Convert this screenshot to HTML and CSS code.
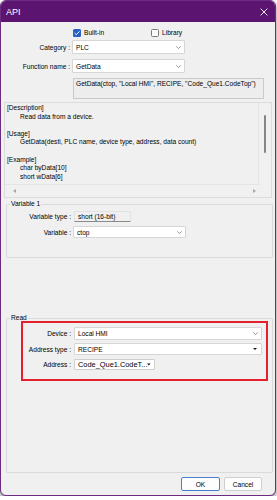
FILE: index.html
```html
<!DOCTYPE html>
<html lang="en">
<head>
    <meta charset="UTF-8">
    <title>API</title>
    <link rel="stylesheet" href="styles.css">
</head>
<body>

<div class="window">
    <div class="titlebar">
        <span class="title">API</span>
        <svg class="close" width="8" height="8" viewBox="0 0 8 8"><path d="M0.6 0.6L7.4 7.4M7.4 0.6L0.6 7.4" stroke="#fff" stroke-width="0.9"/></svg>
    </div>

    <div class="content">
        <!-- Source -->
        <div class="check-row">
            <label class="check-item built-in">
                <span class="box checked"><svg width="8" height="8" viewBox="0 0 8 8"><path d="M1.6 4.1L3.3 5.7L6.5 2.3" fill="none" stroke="#fff" stroke-width="1"/></svg></span>
                Built-in
            </label>
            <label class="check-item">
                <span class="box"></span>
                Library
            </label>
        </div>

        <div class="row top-row row-category">
            <span class="label">Category :</span>
            <div class="combo combo-top">
                <span>PLC</span>
                <svg width="5" height="3" viewBox="0 0 5 3"><path d="M0.3 0.3L2.5 2.6L4.7 0.3" fill="none" stroke="#6e6e6e" stroke-width="0.7"/></svg>
            </div>
        </div>

        <div class="row top-row row-function">
            <span class="label">Function name :</span>
            <div class="combo combo-top">
                <span>GetData</span>
                <svg width="5" height="3" viewBox="0 0 5 3"><path d="M0.3 0.3L2.5 2.6L4.7 0.3" fill="none" stroke="#6e6e6e" stroke-width="0.7"/></svg>
            </div>
        </div>

        <div class="signature">GetData(ctop, "Local HMI", RECIPE, "Code_Que1.CodeTop")</div>

        <!-- Description -->
        <div class="desc">
            <div class="desc-text">
                <div>[Description]</div>
                <div class="indent">Read data from a device.</div>
                <div>&nbsp;</div>
                <div>[Usage]</div>
                <div class="indent">GetData(desti, PLC name, device type, address, data count)</div>
                <div>&nbsp;</div>
                <div>[Example]</div>
                <div class="indent">char byData[10]</div>
                <div class="indent">short wData[6]</div>
                <div>&nbsp;</div>
            </div>
            <div class="vscroll"><span class="thumb"></span></div>
            <div class="hscroll">
                <svg width="3" height="4" viewBox="0 0 3 4"><path d="M3 0V4L0 2Z" fill="#a8a8a8"/></svg>
                <svg width="3" height="4" viewBox="0 0 3 4"><path d="M0 0V4L3 2Z" fill="#a8a8a8"/></svg>
            </div>
            <div class="corner"></div>
        </div>

        <!-- Variable 1 -->
        <fieldset class="group group-var">
            <legend>Variable 1</legend>
            <div class="row">
                <span class="label">Variable type :</span>
                <div class="readonly">short (16-bit)</div>
            </div>
            <div class="row row-variable">
                <span class="label">Variable :</span>
                <div class="combo combo-var">
                    <span>ctop</span>
                    <svg width="5" height="3" viewBox="0 0 5 3"><path d="M0.3 0.3L2.5 2.6L4.7 0.3" fill="none" stroke="#6e6e6e" stroke-width="0.7"/></svg>
                </div>
            </div>
        </fieldset>

        <!-- Read -->
        <fieldset class="group group-read">
            <legend>Read</legend>
            <div class="row row-device">
                <span class="label">Device :</span>
                <div class="combo combo-wide">
                    <span>Local HMI</span>
                    <svg width="5" height="3" viewBox="0 0 5 3"><path d="M0.3 0.3L2.5 2.6L4.7 0.3" fill="none" stroke="#6e6e6e" stroke-width="0.7"/></svg>
                </div>
            </div>
            <div class="row row-type">
                <span class="label">Address type :</span>
                <div class="combo combo-wide combo-type">
                    <span>RECIPE</span>
                    <svg width="4" height="2" viewBox="0 0 4 2"><path d="M0 0H4L2 2Z" fill="#1a1a1a"/></svg>
                </div>
            </div>
            <div class="row row-address">
                <span class="label">Address :</span>
                <div class="combo combo-address">
                    <span>Code_Que1.CodeT...</span>
                    <svg width="5" height="3" viewBox="0 0 5 3"><path d="M0 0H5L2.5 3Z" fill="#1a1a1a"/></svg>
                </div>
            </div>
        </fieldset>

        <div class="buttons">
            <button type="button" class="btn btn-default">OK</button>
            <button type="button" class="btn">Cancel</button>
        </div>
    </div>

    <!-- annotation drawn over the dialog -->
    <div class="highlight"></div>
</div>

</body>
</html>
```

FILE: styles.css
```css
* {
    box-sizing: border-box;
}

body {
    margin: 0;
    background-color: #ffffff;
    font-family: 'Liberation Sans', Arial, sans-serif;
    font-size: 6.6px;
    color: #000000;
}

.window {
    position: relative;
    width: 276px;
    height: 496px;
    border: 1px solid #6b2c82; /* bordure violette de la fenêtre */
    border-radius: 6px;
    background-color: #f0f0f0;
    overflow: hidden;
    box-shadow: 0 2px 4px rgba(0, 0, 0, 0.55);
}

.titlebar {
    height: 21px;
    background-color: #5c1471;
    color: white;
    display: flex;
    align-items: center;
    justify-content: space-between;
    padding: 0 7px 0 5px;
}

.title {
    font-size: 9px;
}

/* Zone principale */
.check-row {
    display: flex;
    align-items: center;
    height: 9px;
    margin-top: 6px;
    padding-left: 72px;
}

.check-item {
    display: flex;
    align-items: center;
    gap: 3px;
}

.built-in {
    width: 78px;
}

.box {
    width: 8px;
    height: 8px;
    border: 1px solid #7a7a7a;
    border-radius: 1.5px;
    background-color: #fafafa;
    display: flex;
}

.box.checked {
    border: none;
    background-color: #2560c4;
}

.row {
    display: flex;
    align-items: center;
}

.label {
    text-align: right;
    white-space: nowrap;
}

.top-row .label {
    width: 69px;
    margin-right: 2px;
}

.top-row {
    height: 14px;
}

.row-category {
    margin-top: 3px;
}

.row-function {
    margin-top: 5px;
}

.combo {
    height: 100%;
    display: flex;
    align-items: center;
    justify-content: space-between;
    background-color: #ffffff;
    border: 1px solid #d6d6d6;
    border-radius: 1px;
    padding: 0 3px 0 3px;
}

.combo-top {
    width: 113px;
}

.signature {
    margin: 5px 0 0 72px;
    width: 191px;
    height: 21px;
    border: 1px solid #c9c9c9;
    background-color: #ededed;
    padding: 1px 2px;
    white-space: nowrap;
}

/* Description */
.desc {
    margin: 3px 0 0 3px;
    width: 268px;
    height: 96px;
    border: 1px solid #dcdcdc;
    display: grid;
    grid-template-columns: 1fr 12px;
    grid-template-rows: 1fr 12px;
}

.desc-text {
    line-height: 8.6px;
    padding: 1px 2px;
    overflow: hidden;
    white-space: nowrap;
    border-right: 1px solid #e4e4e4;
    border-bottom: 1px solid #e4e4e4;
}

.desc-text .indent {
    padding-left: 13px;
}

.vscroll {
    display: flex;
    justify-content: center;
    padding-top: 12px;
}

.thumb {
    width: 2px;
    height: 38px;
    background-color: #858585;
    border-radius: 1px;
}

.hscroll {
    display: flex;
    align-items: center;
    justify-content: space-between;
    padding: 0 3px 0 8px;
}

/* Groupes */
.group {
    margin: 0 0 0 5px;
    width: 267px;
    border: 1px solid #dadada;
    border-radius: 1px;
    padding: 0 0 0 0;
    min-width: 0;
}

.group legend {
    line-height: 8px;
    padding: 0 1px;
    margin-left: 3px;
}

.group .label {
    width: 64px;
    margin-right: 3px;
}

.group-var {
    margin-top: 2px;
    padding-top: 3px;
    padding-bottom: 19px;
}

.group-var .row {
    height: 11px;
}

.group-var .row-variable {
    height: 12px;
    margin-top: 4px;
}

.readonly {
    width: 57px;
    height: 100%;
    border: 1px solid #e2e2e2;
    border-bottom: 1px solid #8a8a8a;
    padding: 0 3px;
    display: flex;
    align-items: center;
}

.combo-var {
    width: 113px;
    margin-left: -1px;
}

.group-read {
    margin-top: 56px;
    padding-top: 5px;
    padding-bottom: 102px;
}

.row-device {
    height: 13px;
}

.row-type {
    height: 12px;
    margin-top: 3px;
}

.row-address {
    height: 11px;
    margin-top: 4px;
}

.combo-wide {
    width: 188px;
}

.combo-type {
    padding-right: 4px;
}

.combo-address {
    width: 81px;
    font-size: 7.4px;
    border-color: #cfcfcf;
}

/* Boutons */
.buttons {
    display: flex;
    justify-content: flex-end;
    gap: 4px;
    margin-top: 4px;
    padding-right: 13px;
}

.btn {
    height: 14px;
    width: 38px;
    padding: 0;
    font-family: inherit;
    font-size: 6.6px;
    background-color: #fdfdfd;
    border: 1px solid #d0d0d0;
    border-radius: 2px;
}

.btn-default {
    width: 39px;
    border-color: #4a7fcf; /* bouton par défaut */
}

/* Cadre rouge d'annotation */
.highlight {
    position: absolute;
    left: 20px;
    top: 320px;
    width: 247px;
    height: 60px;
    border: 2px solid #e3202b;
}
```
